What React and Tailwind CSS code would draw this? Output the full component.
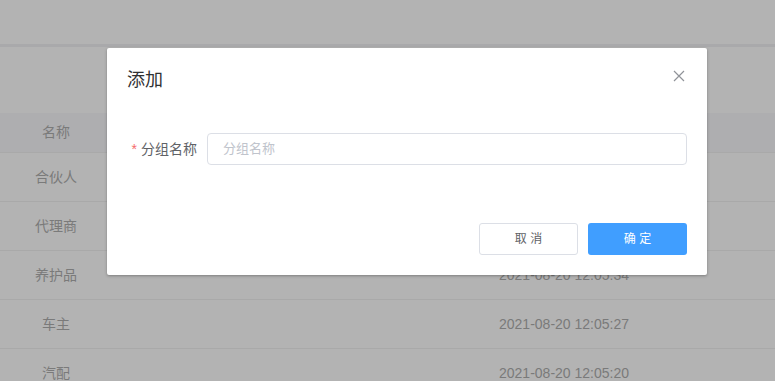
import React from 'react';

const rows = [
  { name: '合伙人', time: '2021-08-20 12:06:02' },
  { name: '代理商', time: '2021-08-20 12:05:45' },
  { name: '养护品', time: '2021-08-20 12:05:34' },
  { name: '车主', time: '2021-08-20 12:05:27' },
  { name: '汽配', time: '2021-08-20 12:05:20' },
];

const cjk = { fontFamily: '"Liberation Sans", "Noto Sans CJK SC", sans-serif' };

export default function App() {
  return (
    <div className="relative w-[775px] h-[381px] overflow-hidden bg-[#b3b3b3]" style={cjk}>
      {/* dimmed page underneath */}
      <div className="h-[47px] border-b-[3px] border-[#a9a9ab]" />
      <div className="mt-[66px]">
        <div className="flex h-[40px] items-center bg-[#aeaeb0] border-b border-[#a9a9a9] text-[14px] text-[#7a7a7a]">
          <div className="w-[112px] text-center">名称</div>
        </div>
        {rows.map((r) => (
          <div key={r.name} className="flex h-[49px] items-center border-b border-[#a9a9a9] text-[14px] text-[#7a7a7a]">
            <div className="w-[112px] text-center">{r.name}</div>
            <div className="w-[241px]" />
            <div className="w-[422px] text-center">{r.time}</div>
          </div>
        ))}
      </div>

      {/* dialog */}
      <div className="absolute left-[107px] top-[48px] w-[600px] h-[227px] bg-white rounded-[2px] shadow-[0_1px_3px_rgba(0,0,0,0.3)] flex flex-col">
        <div className="flex items-center justify-between px-5 pt-5 pb-[10px]">
          <span className="text-[18px] leading-6 text-[#303133]">添加</span>
          <svg width="12" height="12" viewBox="0 0 12 12" className="mr-[2px] -mt-2">
            <path d="M1 1 L11 11 M11 1 L1 11" stroke="#909399" strokeWidth="1.2" />
          </svg>
        </div>
        <div className="flex items-center px-5 pt-[31px]">
          <label className="w-[80px] pr-[10px] text-right text-[14px] text-[#606266]">
            <span className="text-[#f56c6c] mr-1">*</span>分组名称
          </label>
          <div className="flex-1 h-[32px] border border-[#dcdfe6] rounded-[4px] flex items-center px-[15px] text-[13px] text-[#c0c4cc]">
            分组名称
          </div>
        </div>
        <div className="mt-auto flex justify-end gap-[10px] px-5 pb-5">
          <button className="w-[99px] h-[32px] border border-[#dcdfe6] rounded-[3px] bg-white text-[12px] text-[#606266]">
            取&nbsp;消
          </button>
          <button className="w-[99px] h-[32px] rounded-[3px] bg-[#409eff] text-[12px] text-white">
            确&nbsp;定
          </button>
        </div>
      </div>
    </div>
  );
}
